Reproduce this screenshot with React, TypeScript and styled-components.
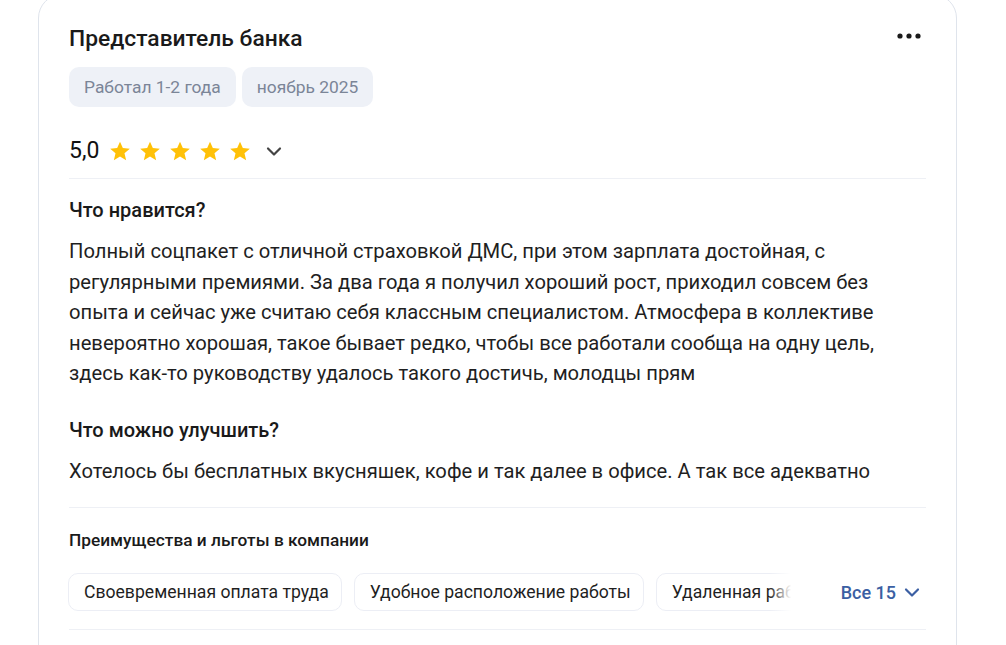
import React from "react";
import styled, { createGlobalStyle } from "styled-components";

const Global = createGlobalStyle`
  html, body { margin: 0; padding: 0; background: #fff; }
  body { font-family: Roboto, "Noto Sans", Arial, sans-serif; color: #1f1f1f; }
  * { box-sizing: border-box; }
`;

const Page = styled.div`
  width: 1006px;
  height: 645px;
  overflow: hidden;
  padding-left: 38px;
`;

const Card = styled.article`
  width: 919px;
  margin-top: -6px;
  border: 1px solid #dfe4ec;
  border-radius: 24px;
  padding: 29px 30px 60px 30px;
  background: #fff;
`;

const Header = styled.div`
  display: flex;
  align-items: flex-start;
  justify-content: space-between;
`;

const Title = styled.h2`
  margin: 0;
  font-size: 22.8px;
  line-height: 30px;
  font-weight: 500;
  color: #1a1a1a;
`;

const MoreButton = styled.button`
  border: 0;
  background: none;
  padding: 0;
  margin-right: 3px;
  width: 28px;
  height: 24px;
  display: flex;
  align-items: center;
  justify-content: center;
  cursor: pointer;
`;

const Tags = styled.div`
  display: flex;
  gap: 6px;
  margin-top: 13px;
`;

const Tag = styled.span`
  display: inline-flex;
  align-items: center;
  height: 40px;
  padding: 0 15px;
  border-radius: 10px;
  background: #eef1f7;
  color: #7b8597;
  font-size: 17.4px;
`;

const RatingRow = styled.div`
  display: flex;
  align-items: center;
  height: 43px;
  margin-top: 29px;
  padding-bottom: 13px;
  border-bottom: 1px solid #eef0f5;
`;

const Score = styled.span`
  font-size: 23px;
  color: #111;
  margin-right: 10px;
`;

const Stars = styled.div`
  display: flex;
  gap: 8px;
`;

const ChevronWrap = styled.span<{ $color: string; $gap: number }>`
  display: inline-flex;
  margin-left: ${(p) => p.$gap}px;
  color: ${(p) => p.$color};
`;

const Section = styled.section`
  padding-top: 19px;
`;

const SectionTitle = styled.h3`
  margin: 0;
  font-size: 20px;
  line-height: 24px;
  font-weight: 500;
  color: #1a1a1a;
`;

const Body = styled.p`
  margin: 14px 0 10px 0;
  font-size: 20.2px;
  line-height: 30.5px;
  color: #1f1f1f;
`;

const Divider = styled.div`
  height: 1px;
  background: #eef0f5;
  margin-top: 21px;
`;

const PerksTitle = styled.h4`
  margin: 21px 0 0 0;
  font-size: 17.3px;
  line-height: 22px;
  font-weight: 500;
  color: #1a1a1a;
`;

const PerksRow = styled.div`
  display: flex;
  align-items: center;
  margin-top: 22px;
  padding-bottom: 18px;
  border-bottom: 1px solid #eef0f5;
`;

const ChipsViewport = styled.div`
  position: relative;
  flex: 0 0 727px;
  margin-left: -1px;
  overflow: hidden;
  &::after {
    content: "";
    position: absolute;
    right: 0;
    top: 0;
    bottom: 0;
    width: 26px;
    background: linear-gradient(to right, rgba(255, 255, 255, 0), #fff 85%);
  }
`;

const Chips = styled.div`
  display: flex;
  gap: 12px;
  white-space: nowrap;
`;

const Chip = styled.span`
  display: inline-flex;
  align-items: center;
  height: 38px;
  padding: 0 12px 0 15px;
  border: 1px solid #eceef5;
  border-radius: 10px;
  font-size: 17.6px;
  color: #1f1f1f;
  flex: none;
`;

const AllButton = styled.button`
  display: flex;
  align-items: center;
  margin-left: auto;
  margin-right: 6px;
  border: 0;
  background: none;
  padding: 0;
  font-family: inherit;
  font-size: 18px;
  font-weight: 500;
  color: #3b5fa3;
  cursor: pointer;
`;

const Star = () => (
  <svg width="22" height="22" viewBox="0 0 24 24">
    <path
      fill="#ffc107"
      d="M12 1.8l3.1 7 7.6.7-5.8 5 1.8 7.5L12 18l-6.7 4 1.8-7.5-5.8-5 7.6-.7z"
    />
  </svg>
);

const ChevronIcon = () => (
  <svg width="16" height="16" viewBox="0 0 16 16" fill="none">
    <path d="M2 5.5l6 6 6-6" stroke="currentColor" strokeWidth="2.2" strokeLinecap="round" strokeLinejoin="round" />
  </svg>
);

const Dots = () => (
  <svg width="24" height="6" viewBox="0 0 24 6">
    <circle cx="3" cy="3" r="2.6" fill="#1a1a1a" />
    <circle cx="12" cy="3" r="2.6" fill="#1a1a1a" />
    <circle cx="21" cy="3" r="2.6" fill="#1a1a1a" />
  </svg>
);

export default function App() {
  return (
    <>
      <Global />
      <Page>
        <Card>
          <Header>
            <Title>Представитель банка</Title>
            <MoreButton aria-label="Ещё">
              <Dots />
            </MoreButton>
          </Header>
          <Tags>
            <Tag>Работал 1-2 года</Tag>
            <Tag>ноябрь 2025</Tag>
          </Tags>
          <RatingRow>
            <Score>5,0</Score>
            <Stars>
              {[0, 1, 2, 3, 4].map((i) => (
                <Star key={i} />
              ))}
            </Stars>
            <ChevronWrap $color="#444" $gap={15}>
              <ChevronIcon />
            </ChevronWrap>
          </RatingRow>
          <Section>
            <SectionTitle>Что нравится?</SectionTitle>
            <Body>
              Полный соцпакет с отличной страховкой ДМС, при этом зарплата достойная, с регулярными
              премиями. За два года я получил хороший рост, приходил совсем без опыта и сейчас уже
              считаю себя классным специалистом. Атмосфера в коллективе невероятно хорошая, такое
              бывает редко, чтобы все работали сообща на одну цель, здесь как-то руководству удалось
              такого достичь, молодцы прям
            </Body>
          </Section>
          <Section>
            <SectionTitle>Что можно улучшить?</SectionTitle>
            <Body>Хотелось бы бесплатных вкусняшек, кофе и так далее в офисе. А так все адекватно</Body>
          </Section>
          <Divider />
          <PerksTitle>Преимущества и льготы в компании</PerksTitle>
          <PerksRow>
            <ChipsViewport>
              <Chips>
                <Chip>Своевременная оплата труда</Chip>
                <Chip>Удобное расположение работы</Chip>
                <Chip>Удаленная работа</Chip>
              </Chips>
            </ChipsViewport>
            <AllButton>
              Все 15
              <ChevronWrap $color="#3b5fa3" $gap={8}>
                <ChevronIcon />
              </ChevronWrap>
            </AllButton>
          </PerksRow>
        </Card>
      </Page>
    </>
  );
}
